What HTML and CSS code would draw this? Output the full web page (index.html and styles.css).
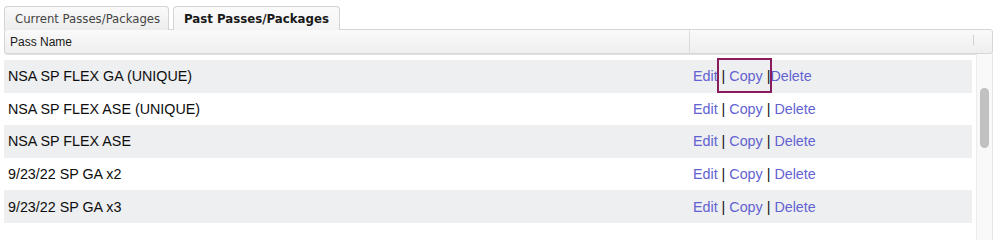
FILE: index.html
```html
<!DOCTYPE html>
<html>
<head>
<meta charset="utf-8">
<link rel="stylesheet" href="styles.css">
</head>
<body>
<div class="panel">
  <div class="tabs">
    <div class="tab">Current Passes/Packages</div>
    <div class="tab active">Past Passes/Packages</div>
  </div>
  <div class="header">
    <div class="hcell name">Pass Name</div>
    <div class="hcell actions"></div>
    <div class="hcell spacer"></div>
  </div>
  <div class="body">
    <div class="rows">
      <div class="row alt"><div class="name">NSA SP FLEX GA (UNIQUE)</div><div class="acts"><a>Edit</a><span class="focus"> | <a>Copy</a> |</span><a>Delete</a></div></div>
      <div class="row"><div class="name">NSA SP FLEX ASE (UNIQUE)</div><div class="acts"><a>Edit</a> | <a>Copy</a> | <a>Delete</a></div></div>
      <div class="row alt"><div class="name">NSA SP FLEX ASE</div><div class="acts"><a>Edit</a> | <a>Copy</a> | <a>Delete</a></div></div>
      <div class="row"><div class="name">9/23/22 SP GA x2</div><div class="acts"><a>Edit</a> | <a>Copy</a> | <a>Delete</a></div></div>
      <div class="row alt"><div class="name">9/23/22 SP GA x3</div><div class="acts"><a>Edit</a> | <a>Copy</a> | <a>Delete</a></div></div>
    </div>
    <div class="scrollbar"><div class="thumb"></div></div>
  </div>
</div>
</body>
</html>
```
FILE: styles.css
```css
html, body {
  margin: 0;
  padding: 0;
  background: #ffffff;
}
body {
  font-family: "Liberation Sans", Arial, sans-serif;
  color: #111;
}
.panel {
  padding: 6px 7px 0 4px;
}
.tabs {
  display: flex;
  gap: 4px;
  height: 23px;
  position: relative;
  z-index: 1;
}
.tab {
  box-sizing: border-box;
  height: 24px;
  padding: 0 0 0 10px;
  border: 1px solid #d3d3d3;
  border-bottom: none;
  border-radius: 4px 4px 0 0;
  background: linear-gradient(#fafafa, #ececec);
  font-family: "DejaVu Sans Condensed", "DejaVu Sans", Verdana, sans-serif;
  font-size: 13px;
  color: #444;
  display: flex;
  align-items: center;
  white-space: nowrap;
  width: 165px;
}
.tab.active {
  width: 167px;
  font-weight: bold;
  color: #1a1a1a;
  background: linear-gradient(#fbfbfb, #f4f4f4);
  font-size: 13.1px;
}
.header {
  display: flex;
  box-sizing: border-box;
  height: 25px;
  border: 1px solid #d6d6d6;
  border-radius: 3px;
  background: linear-gradient(#fafafa, #eeeeee);
  box-shadow: 0 1px 0 #e2e2e2;
}
.hcell {
  display: flex;
  align-items: center;
  font-size: 12px;
  color: #1a1a1a;
}
.hcell.name {
  width: 679px;
  padding-left: 5px;
  border-right: 1px solid #dcdcdc;
}
.hcell.actions {
  width: 283px;
  border-right: 1px solid #d0d0d0;
  margin: 5px 0 8px;
}
.body {
  display: flex;
  height: 186px;
}
.rows {
  width: 969px;
  padding-top: 6px;
}
.row {
  display: flex;
  align-items: center;
  height: 32.6px;
  font-size: 14.3px;
  background: #ffffff;
}
.row.alt {
  background: #eeeff0;
}
.row .name {
  width: 685px;
  padding-left: 4px;
  color: #0d0d0d;
}
.acts {
  color: #111;
  white-space: pre;
}
.acts a {
  color: #6262d2;
}
.focus {
  position: relative;
}
.focus::after {
  content: "";
  position: absolute;
  left: -1px;
  right: -2px;
  top: -10px;
  bottom: -9px;
  border: 2px solid #8a1c5d;
}
.scrollbar {
  box-sizing: border-box;
  margin-left: 4px;
  width: 17px;
  border-left: 1px solid #ececec;
  border-right: 1px solid #e6e6e6;
  background: #f9f9f9;
  padding: 34px 3px 0 3px;
}
.thumb {
  height: 60px;
  border-radius: 5px;
  background: #c1c1c1;
}
```
